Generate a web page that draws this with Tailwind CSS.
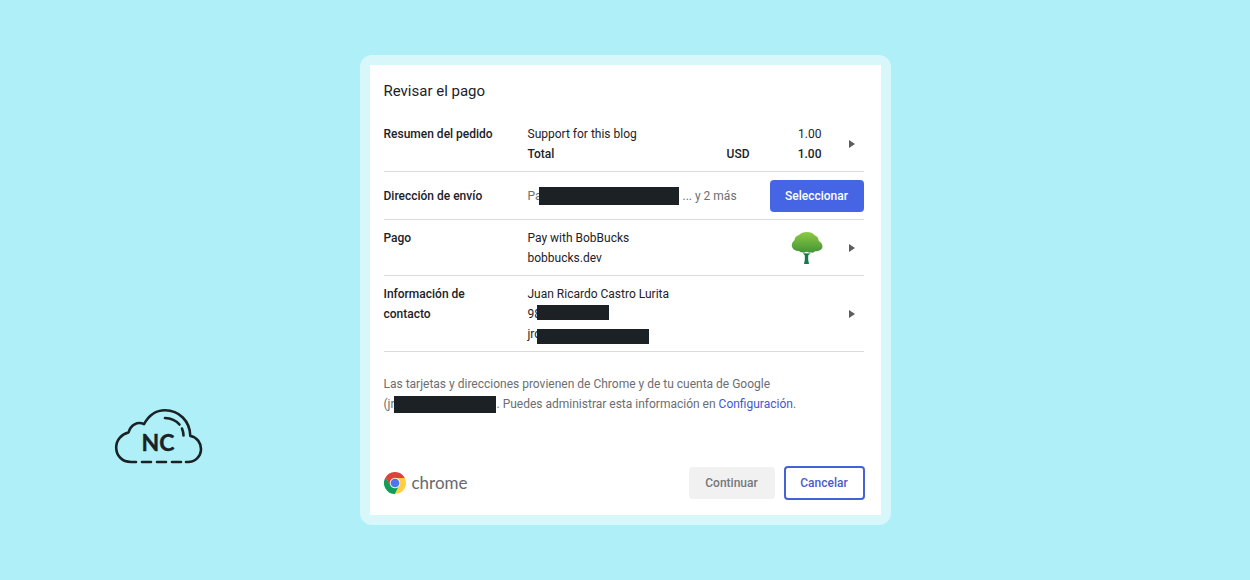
<!DOCTYPE html>
<html lang="es">
<head>
<meta charset="utf-8">
<meta name="viewport" content="width=device-width, initial-scale=1">
<title>Revisar el pago</title>
<script src="https://cdn.jsdelivr.net/npm/@tailwindcss/browser@4"></script>
</head>
<body class="min-h-screen bg-[#afeff8] font-[Roboto,'Noto_Sans',sans-serif] text-xs leading-5 text-[#1c2228]">
<div class="grid min-h-screen grid-cols-[1fr_minmax(0,531px)_1fr] items-center">
  <div class="self-end pb-[116px] pl-[114px]">
    <svg class="h-14 w-[89px]" viewBox="0 0 89 56" fill="none" stroke="#1a2226" stroke-width="2.6" stroke-linecap="round" stroke-linejoin="round" role="img" aria-label="NC">
      <path d="M22 54H17C8 54 2.200 47.500 2.200 39.500C2.200 31.500 8 26 14.500 24.500C16.500 17 23.500 13 30 16.200C35 7 42 2.300 51 2.300C65 2.300 76 13 76.300 28C83 29 87 35 87 41C87 48.500 81 54 74 54H72"/>
      <path d="M28 54H37M43 54H52M58 54H67M51 10C57 10.300 62 12.500 65.500 16.500M68 20.500C69 23 69.500 25 69.500 27.500"/>
      <text x="44" y="43" text-anchor="middle" fill="#1a2226" stroke="#1a2226" stroke-width="0.400" font-family="Lato, sans-serif" font-size="23" font-weight="700">NC</text>
    </svg>
  </div>
  <main class="rounded-xl bg-[#d7f7fa] p-[10px]">
    <section class="bg-white pt-4 pr-[17px] pb-[15px] pl-[14px]">
      <h1 class="text-[15px] leading-5">Revisar el pago</h1>
      <div class="mt-[15px]">
        <div class="flex border-b border-[#d9dadc] pt-2 pb-[7px]">
          <h2 class="w-36 shrink-0 font-medium">Resumen del pedido</h2>
          <div class="flex-1">
            <div class="flex justify-between"><span>Support for this blog</span><span>1.00</span></div>
            <div class="flex font-medium"><span class="flex-1">Total</span><span>USD</span><span class="w-[72px] text-right">1.00</span></div>
          </div>
          <button class="ml-[27px] flex w-[15px] items-center" aria-label="Ver resumen"><svg class="h-2 w-[6px]" viewBox="0 0 6 8"><path d="M0 0L6 4L0 8Z" fill="#5a5d61"/></svg></button>
        </div>
        <div class="flex h-12 items-center border-b border-[#d9dadc]">
          <h2 class="w-36 shrink-0 font-medium">Dirección de envío</h2>
          <div class="flex flex-1 items-center text-[#6b6e72]"><span class="w-[11px]">Pa</span><span class="relative mr-1 h-[18px] w-[140px] bg-[#1c2126]"></span>... y 2 más</div>
          <button class="h-8 w-[94px] rounded-sm bg-[#4565e4] font-medium text-white">Seleccionar</button>
        </div>
        <div class="flex border-b border-[#d9dadc] pt-2 pb-[7px]">
          <h2 class="w-36 shrink-0 font-medium">Pago</h2>
          <div class="flex-1"><p>Pay with BobBucks</p><p>bobbucks.dev</p></div>
          <svg class="mt-1 h-8 w-8" viewBox="0 0 32 32" role="img" aria-label="BobBucks">
            <defs><linearGradient id="leaf" x1="0" y1="0" x2="0" y2="1"><stop offset="0" stop-color="#8bcb43"/><stop offset="1" stop-color="#459338"/></linearGradient></defs>
            <path d="M10.500 19.500L13.800 23.500V28L13 32H18L17.200 28V23.500L21 19.500L15.500 21.500Z" fill="#15794f"/>
            <path d="M16 0C12.500 0 9.500 1.200 8.300 2.800C5 3.700 3.500 6 3.600 8C1.300 9.800 .6 12 .8 14C1.200 17 5 19.500 8.500 19.200C10 21 13.500 21 16 19.800C19 21.500 22.500 21 24 19.300C28 19.500 31.500 17.500 31.500 14.500C31.500 12 30 10 27.800 9C27.500 6 26 4 23.500 3.200C22 1 19.500 0 16 0Z" fill="url(#leaf)"/>
            <path d="M10.500 20.500Q13 21.800 15.500 20.600Q18 21.800 20.500 20.500" fill="none" stroke="#e5f0e2" stroke-width=".8"/>
          </svg>
          <button class="ml-[26px] flex w-[15px] items-center" aria-label="Cambiar pago"><svg class="h-2 w-[6px]" viewBox="0 0 6 8"><path d="M0 0L6 4L0 8Z" fill="#5a5d61"/></svg></button>
        </div>
        <div class="flex border-b border-[#d9dadc] pt-2 pb-[7px]">
          <h2 class="w-36 shrink-0 pr-8 font-medium">Información de contacto</h2>
          <div class="flex-1">
            <p>Juan Ricardo Castro Lurita</p>
            <p class="flex"><span class="w-[9px]">98</span><span class="relative mt-px h-[15px] w-[72px] bg-[#1c2126]"></span></p>
            <p class="flex items-end"><span class="w-[9px]">jrc</span><span class="relative h-[15px] w-28 bg-[#1c2126]"></span></p>
          </div>
          <button class="flex w-[15px] items-center" aria-label="Cambiar contacto"><svg class="h-2 w-[6px]" viewBox="0 0 6 8"><path d="M0 0L6 4L0 8Z" fill="#5a5d61"/></svg></button>
        </div>
      </div>
      <div class="mt-[22px] text-[#6b6e72]">
        <p>Las tarjetas y direcciones provienen de Chrome y de tu cuenta de Google</p>
        <p class="flex items-center"><span class="w-[10px]">(jr</span><span class="relative h-[17px] w-[102px] bg-[#1c2126]"></span><span class="ml-px">. Puedes administrar esta información en <a href="#" class="text-[#4257d0]">Configuración</a>.</span></p>
      </div>
      <footer class="-mr-px mt-[52px] flex items-center">
        <svg class="h-[22px] w-[22px]" viewBox="0 0 48 48" aria-hidden="true">
          <path d="M3.200 12A24 24 0 0 0 24 48L33.500 29.500L24 24L14.500 29.500Z" fill="#109d58"/>
          <path d="M24 48A24 24 0 0 0 45.300 13H24L33.500 29.500Z" fill="#ffcd42"/>
          <path d="M3.200 12L14 30.500L24 24V13H45L44.800 12A24 24 0 0 0 3.200 12Z" fill="#dc4437"/>
          <circle cx="24" cy="24" r="11.500" fill="#f1f1f1"/><circle cx="24" cy="24" r="9.500" fill="#4a76ee"/>
        </svg>
        <span class="ml-[6px] flex-1 font-['Lato',sans-serif] text-[17px] text-[#66696d]">chrome</span>
        <button disabled class="h-8 w-[86px] rounded-sm bg-[#f1f1f1] font-medium text-[#75787c]">Continuar</button>
        <button class="ml-[9px] h-[34px] w-[81px] rounded border-2 border-[#4562d4] font-medium text-[#4b5bce]">Cancelar</button>
      </footer>
    </section>
  </main>
</div>
</body>
</html>
